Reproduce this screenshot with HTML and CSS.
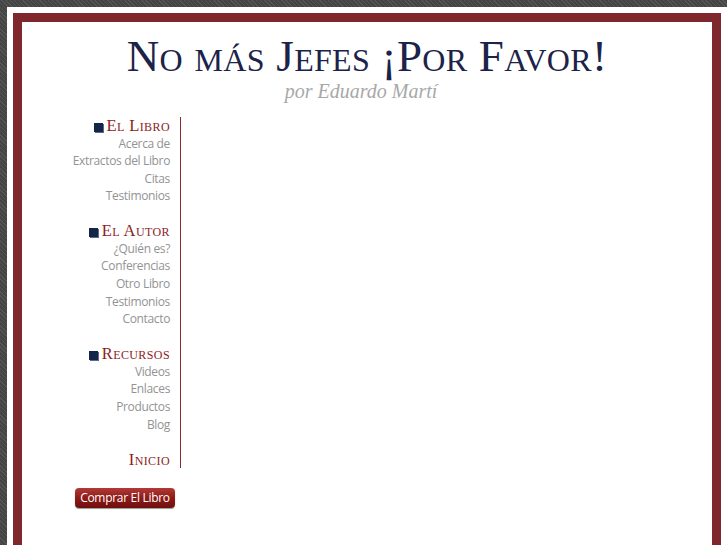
FILE: index.html
```html
<!DOCTYPE html>
<html lang="es">
<head>
<meta charset="utf-8">
<title>No más Jefes ¡Por Favor!</title>
<link rel="stylesheet" href="styles.css">
</head>
<body>
<div class="page">
  <div class="frame">
    <header class="header">
      <h1 class="title">No más Jefes ¡Por Favor!</h1>
      <div class="byline">por Eduardo Martí</div>
    </header>
    <div class="main">
      <div class="side">
        <nav class="nav">
          <div class="group">
            <div class="heading"><span class="bullet"></span>El Libro</div>
            <a class="link" href="#">Acerca de</a>
            <a class="link" href="#">Extractos del Libro</a>
            <a class="link" href="#">Citas</a>
            <a class="link" href="#">Testimonios</a>
          </div>
          <div class="group">
            <div class="heading"><span class="bullet"></span>El Autor</div>
            <a class="link" href="#">¿Quién es?</a>
            <a class="link" href="#">Conferencias</a>
            <a class="link" href="#">Otro Libro</a>
            <a class="link" href="#">Testimonios</a>
            <a class="link" href="#">Contacto</a>
          </div>
          <div class="group">
            <div class="heading"><span class="bullet"></span>Recursos</div>
            <a class="link" href="#">Videos</a>
            <a class="link" href="#">Enlaces</a>
            <a class="link" href="#">Productos</a>
            <a class="link" href="#">Blog</a>
          </div>
          <div class="heading">Inicio</div>
        </nav>
        <div class="buy-wrap"><a class="buy" href="#">Comprar El Libro</a></div>
      </div>
      <div class="content"></div>
    </div>
  </div>
</div>
</body>
</html>
```
FILE: styles.css
```css
html, body {
  margin: 0;
  padding: 0;
}
body {
  background-color: #4a4a4a;
  background-image: repeating-linear-gradient(45deg, #555 0, #555 1px, #444 1px, #444 3px);
  overflow: hidden;
}
.page {
  margin: 7px 0 0 7px;
  width: 708px;
  padding: 6px;
  background: #fff;
}
.frame {
  border: 9px solid #7e282d;
  min-height: 620px;
  background: #fff;
}
.header {
  text-align: center;
  padding-top: 11px;
  height: 84px;
}
.title {
  margin: 0;
  font-family: "Liberation Serif", serif;
  font-weight: normal;
  font-variant: small-caps;
  font-size: 45px;
  line-height: 46px;
  color: #1c2349;
  letter-spacing: 0.3px;
}
.byline {
  font-family: "Liberation Serif", serif;
  font-style: italic;
  font-size: 20px;
  line-height: 20px;
  color: #a8a8a8;
  margin-top: 2px;
  padding-right: 12px;
}
.main {
  display: flex;
}
.side {
  width: 158px;
  flex: none;
}
.nav {
  border-right: 1px solid #8a2a2e;
  padding-right: 10px;
  text-align: right;
  width: 148px;
}
.group {
  margin-bottom: 17.5px;
}
.heading {
  font-family: "Liberation Serif", serif;
  font-variant: small-caps;
  font-size: 16.5px;
  line-height: 17.5px;
  color: #8b1d1d;
  letter-spacing: 0.4px;
}
.bullet {
  display: inline-block;
  width: 9px;
  height: 9px;
  background: #14254a;
  box-shadow: 1px 1px 0 #5b6a86;
  margin-right: 4px;
  vertical-align: -1px;
}
.link {
  display: block;
  font-family: "Open Sans", sans-serif;
  font-size: 12px;
  line-height: 17.6px;
  color: #939393;
  text-decoration: none;
  letter-spacing: -0.35px;
}
.buy-wrap {
  padding-top: 20px;
  padding-left: 53px;
}
.buy {
  display: inline-block;
  width: 100px;
  height: 20px;
  box-sizing: border-box;
  border-radius: 4px;
  background: linear-gradient(#b23a36, #8e1a17 50%, #6e0f0e);
  box-shadow: 0 1px 1px #999;
  color: #fff;
  font-family: "Open Sans", sans-serif;
  font-size: 12px;
  line-height: 20px;
  text-align: center;
  text-decoration: none;
  letter-spacing: -0.3px;
}
.content {
  flex: 1;
}
```
